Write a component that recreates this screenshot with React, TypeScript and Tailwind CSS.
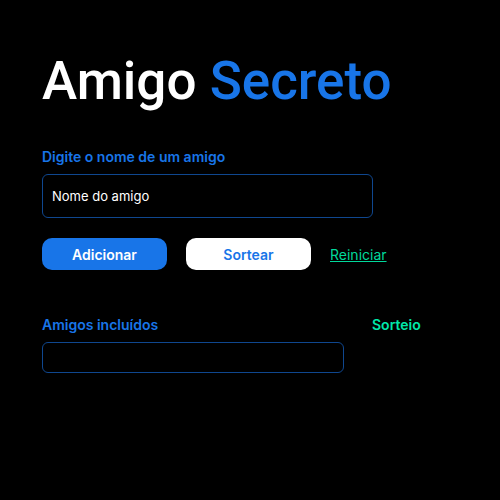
export default function App() {
  return (
    <main className="min-h-screen bg-black px-[42px] pt-[49px] font-['Inter',sans-serif] text-[#1875e8]">
      <h1 className="whitespace-nowrap font-['Roboto',sans-serif] text-[53px] leading-[64px] font-medium text-white">
        Amigo <span className="text-[#1875e8]">Secreto</span>
      </h1>
      <form className="mt-[35px]" onSubmit={(e) => e.preventDefault()}>
        <label htmlFor="friend" className="block text-[14px] leading-[18px] font-semibold">Digite o nome de um amigo</label>
        <input id="friend" type="text" placeholder="Nome do amigo" className="mt-2 block h-11 w-full max-w-[331px] rounded-md border border-[#0f478f] bg-transparent px-[9px] text-[13px] text-white placeholder:text-white placeholder:opacity-100" />
        <div className="mt-5 flex items-center gap-[19px]">
          <button type="submit" className="h-8 w-[125px] rounded-[10px] bg-[#1875e8] text-[14px] font-semibold text-white">Adicionar</button>
          <button type="button" className="h-8 w-[125px] rounded-[10px] bg-white text-[14px] font-semibold">Sortear</button>
          <a href="#" className="text-[14px] text-[#00d99b] underline">Reiniciar</a>
        </div>
      </form>
      <section className="mt-[46px] flex gap-7">
        <div className="w-[302px]">
          <h2 className="text-[14px] leading-[18px] font-semibold">Amigos incluídos</h2>
          <div className="mt-2 h-[31px] rounded-md border border-[#0f478f]" />
        </div>
        <h2 className="text-[14px] leading-[18px] font-semibold text-[#00e8aa]">Sorteio</h2>
      </section>
    </main>
  );
}
